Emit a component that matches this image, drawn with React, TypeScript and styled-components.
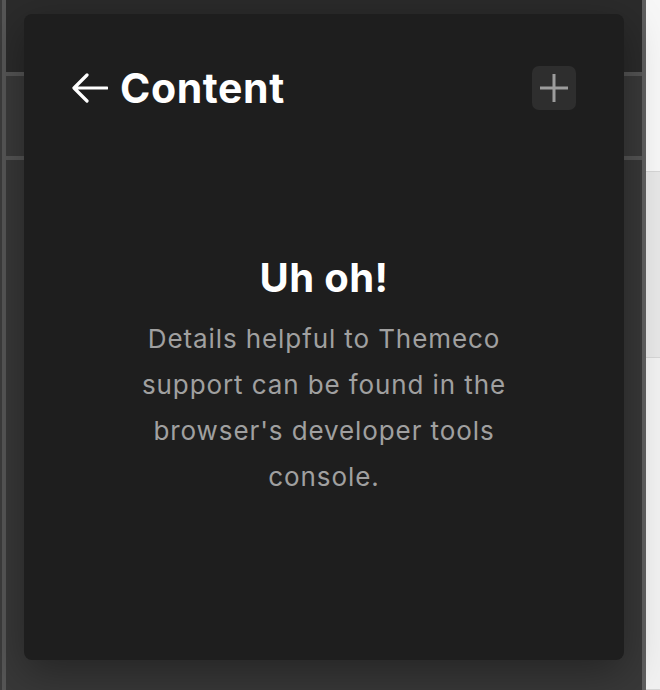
import React from "react";
import styled, { createGlobalStyle } from "styled-components";

const Global = createGlobalStyle`
  html, body { margin: 0; padding: 0; background: #2b2b2b; }
  body { font-family: Inter, "Noto Sans", sans-serif; -webkit-font-smoothing: antialiased; }
  * { box-sizing: border-box; }
`;

const Page = styled.div`
  position: relative;
  display: flex;
  width: 660px;
  height: 690px;
  overflow: hidden;
`;

const LeftRail = styled.div`
  width: 6px;
  flex: none;
  background: #565656;
  border-left: 2px solid #3c3c3c;
`;

const Main = styled.div`
  flex: 1;
  display: flex;
  flex-direction: column;
`;

const Band = styled.div<{ $h?: number; $bg: string }>`
  height: ${(p) => (p.$h ? `${p.$h}px` : "auto")};
  flex: ${(p) => (p.$h ? "none" : "1")};
  background: ${(p) => p.$bg};
`;

const Rule = styled.div`
  height: 4px;
  flex: none;
  background: #555555;
`;

const GrayBar = styled.div`
  width: 4px;
  flex: none;
  background: #5e5e5e;
`;

const LightPanel = styled.div`
  width: 14px;
  flex: none;
  display: flex;
  flex-direction: column;
`;

const LightBand = styled.div<{ $h?: number; $bg: string }>`
  height: ${(p) => (p.$h ? `${p.$h}px` : "auto")};
  flex: ${(p) => (p.$h ? "none" : "1")};
  background: ${(p) => p.$bg};
  border-bottom: 1px solid #d6d6d6;
`;

const Card = styled.div`
  position: absolute;
  left: 24px;
  top: 14px;
  width: 600px;
  height: 646px;
  border-radius: 8px;
  background: #1e1e1e;
  box-shadow: 0 12px 40px rgba(0, 0, 0, 0.35);
  display: flex;
  flex-direction: column;
  padding: 52px 48px 0 48px;
`;

const Header = styled.div`
  display: flex;
  align-items: center;
  justify-content: space-between;
  height: 44px;
`;

const Title = styled.div`
  display: flex;
  align-items: center;
  gap: 12px;
  color: #ffffff;
  font-size: 41px;
  font-weight: 700;
  letter-spacing: 0.6px;
`;

const AddButton = styled.button`
  width: 44px;
  height: 44px;
  border: none;
  border-radius: 7px;
  background: #2e2e2e;
  display: flex;
  align-items: center;
  justify-content: center;
  padding: 0;
`;

const Message = styled.div`
  display: flex;
  flex-direction: column;
  align-items: center;
  margin-top: 144px;
  text-align: center;
`;

const Heading = styled.h2`
  margin: 0;
  color: #ffffff;
  font-size: 40px;
  font-weight: 700;
  letter-spacing: 0.4px;
  line-height: 48px;
`;

const Body = styled.p`
  margin: 14px 0 0;
  width: 420px;
  color: #a0a0a0;
  font-size: 26px;
  letter-spacing: 0.9px;
  line-height: 46px;
  font-weight: 400;
`;

export default function App() {
  return (
    <>
      <Global />
      <Page>
        <LeftRail />
        <Main>
          <Band $h={72} $bg="#2b2b2b" />
          <Rule />
          <Band $h={80} $bg="#3a3a3a" />
          <Rule />
          <Band $bg="#383838" />
        </Main>
        <GrayBar />
        <LightPanel>
          <LightBand $h={172} $bg="#f7f7f7" />
          <LightBand $h={186} $bg="#e7e7e7" />
          <LightBand $bg="#f1f1f1" />
        </LightPanel>
        <Card>
          <Header>
            <Title>
              <svg width="36" height="30" viewBox="0 0 36 30" fill="none">
                <path
                  d="M35 15H3M15 2L2 15l13 13"
                  stroke="#ffffff"
                  strokeWidth="3.2"
                  strokeLinecap="round"
                  strokeLinejoin="round"
                />
              </svg>
              <span>Content</span>
            </Title>
            <AddButton aria-label="Add">
              <svg width="28" height="28" viewBox="0 0 28 28" fill="none">
                <path d="M14 0v28M0 14h28" stroke="#9c9c9c" strokeWidth="3" />
              </svg>
            </AddButton>
          </Header>
          <Message>
            <Heading>Uh oh!</Heading>
            <Body>
              Details helpful to Themeco support can be found in the browser's developer tools console.
            </Body>
          </Message>
        </Card>
      </Page>
    </>
  );
}
